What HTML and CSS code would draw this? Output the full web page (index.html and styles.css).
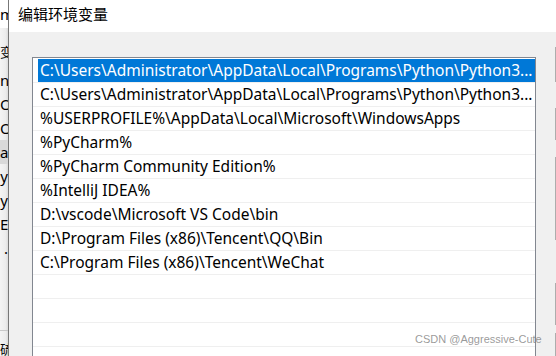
FILE: index.html
```html
<!DOCTYPE html>
<html lang="zh-CN">
<head>
    <meta charset="UTF-8">
    <title>编辑环境变量</title>
    <link rel="stylesheet" href="styles.css">
</head>
<body>

    <div class="behind">
        <div class="behind-line top">m</div>
        <div class="behind-line cjk first">变</div>
        <div class="behind-line">nt</div>
        <div class="behind-line">Or</div>
        <div class="behind-line">Or</div>
        <div class="behind-line picked">a</div>
        <div class="behind-line">y</div>
        <div class="behind-line">y</div>
        <div class="behind-line">E</div>
        <div class="behind-line">.</div>
        <div class="behind-rule"></div>
        <div class="behind-line cjk">硫</div>
    </div>

    <div class="dialog">
        <div class="titlebar">编辑环境变量</div>
        <div class="content">
            <div class="list">
                <div class="row"><div class="item selected">C:\Users\Administrator\AppData\Local\Programs\Python\Python3...</div></div>
                <div class="row"><div class="item">C:\Users\Administrator\AppData\Local\Programs\Python\Python3...</div></div>
                <div class="row"><div class="item">%USERPROFILE%\AppData\Local\Microsoft\WindowsApps</div></div>
                <div class="row"><div class="item">%PyCharm%</div></div>
                <div class="row"><div class="item">%PyCharm Community Edition%</div></div>
                <div class="row"><div class="item">%IntelliJ IDEA%</div></div>
                <div class="row"><div class="item">D:\vscode\Microsoft VS Code\bin</div></div>
                <div class="row"><div class="item">D:\Program Files (x86)\Tencent\QQ\Bin</div></div>
                <div class="row"><div class="item">C:\Program Files (x86)\Tencent\WeChat</div></div>
                <div class="row"><div class="item"></div></div>
                <div class="row"><div class="item"></div></div>
                <div class="row"><div class="item"></div></div>
                <div class="row"><div class="item"></div></div>
            </div>
            <div class="buttons">
                <div class="btn b1">新建(N)</div>
                <div class="btn b2">编辑(E)</div>
                <div class="btn b3">浏览(B)...</div>
                <div class="btn b4">删除(D)</div>
                <div class="btn b5">上移(U)</div>
            </div>
        </div>
        <div class="watermark">CSDN @Aggressive-Cute</div>
    </div>

</body>
</html>
```

FILE: styles.css
```css
body {
    margin: 0;
    width: 556px;
    height: 356px;
    overflow: hidden;
    display: flex;
    font-family: "Noto Sans", "Noto Sans CJK SC", sans-serif;
    color: #000;
    background: #f0f0f0;
}

/* the window behind the dialog, only a sliver shows */
.behind {
    width: 8px;
    flex-shrink: 0;
    overflow: hidden;
    background: linear-gradient(90deg, #f4f4f4 0%, #ececec 70%, #dcdcdc 100%);
    font-size: 15px;
}

.behind-line {
    height: 24px;
    line-height: 24px;
    text-align: right;
    white-space: nowrap;
}

.behind-line.top {
    height: 28px;
    line-height: 28px;
    background: #fff;
}

.behind-line.first {
    margin-top: 12px;
    height: 28px;
}

.behind-line.cjk {
    font-family: "Noto Sans CJK SC", sans-serif;
    font-size: 13px;
}

.behind-line.picked {
    background: #d9d9d9;
}

.behind-rule {
    height: 1px;
    margin-top: 70px;
    margin-bottom: 6px;
    background: #c8c8c8;
}

.dialog {
    position: relative;
    flex: 1;
    border-left: 1px solid #777;
    background: #f0f0f0;
}

.titlebar {
    height: 32px;
    line-height: 28px;
    padding-left: 9px;
    background: #fff;
    font-family: "Noto Sans CJK SC", sans-serif;
    font-size: 15px;
}

.content {
    display: flex;
    align-items: flex-start;
    gap: 19px;
    padding: 25px 0 0 23px;
}

.list {
    width: 502px;
    flex-shrink: 0;
    height: 320px;
    padding-top: 1px;
    background: #fff;
    border: 1px solid #828790;
}

.row {
    height: 24px;
    border-bottom: 1px solid #efefef;
    box-sizing: border-box;
}

.item {
    height: 23px;
    line-height: 23px;
    margin-left: 5px;
    padding-left: 2px;
    font-size: 15.5px;
    white-space: nowrap;
    overflow: hidden;
}

.item.selected {
    background: #0078d7;
    color: #fff;
}

.buttons {
    display: flex;
    flex-direction: column;
    flex-shrink: 0;
    margin-top: -10px;
}

.btn {
    width: 90px;
    box-sizing: border-box;
    border: 1px solid #adadad;
    background: #e1e1e1;
    font-size: 13px;
    line-height: 30px;
    padding-left: 12px;
}

.b1 { height: 35px; }
.b2 { height: 32px; margin-top: 26px; }
.b3 { height: 83px; margin-top: 17px; }
.b4 { height: 42px; margin-top: 43px; }
.b5 { height: 40px; margin-top: 8px; }

.watermark {
    position: absolute;
    left: 406px;
    top: 333px;
    font-family: "Liberation Sans", sans-serif;
    font-size: 11px;
    color: rgba(120, 120, 120, 0.75);
    white-space: nowrap;
}
```
